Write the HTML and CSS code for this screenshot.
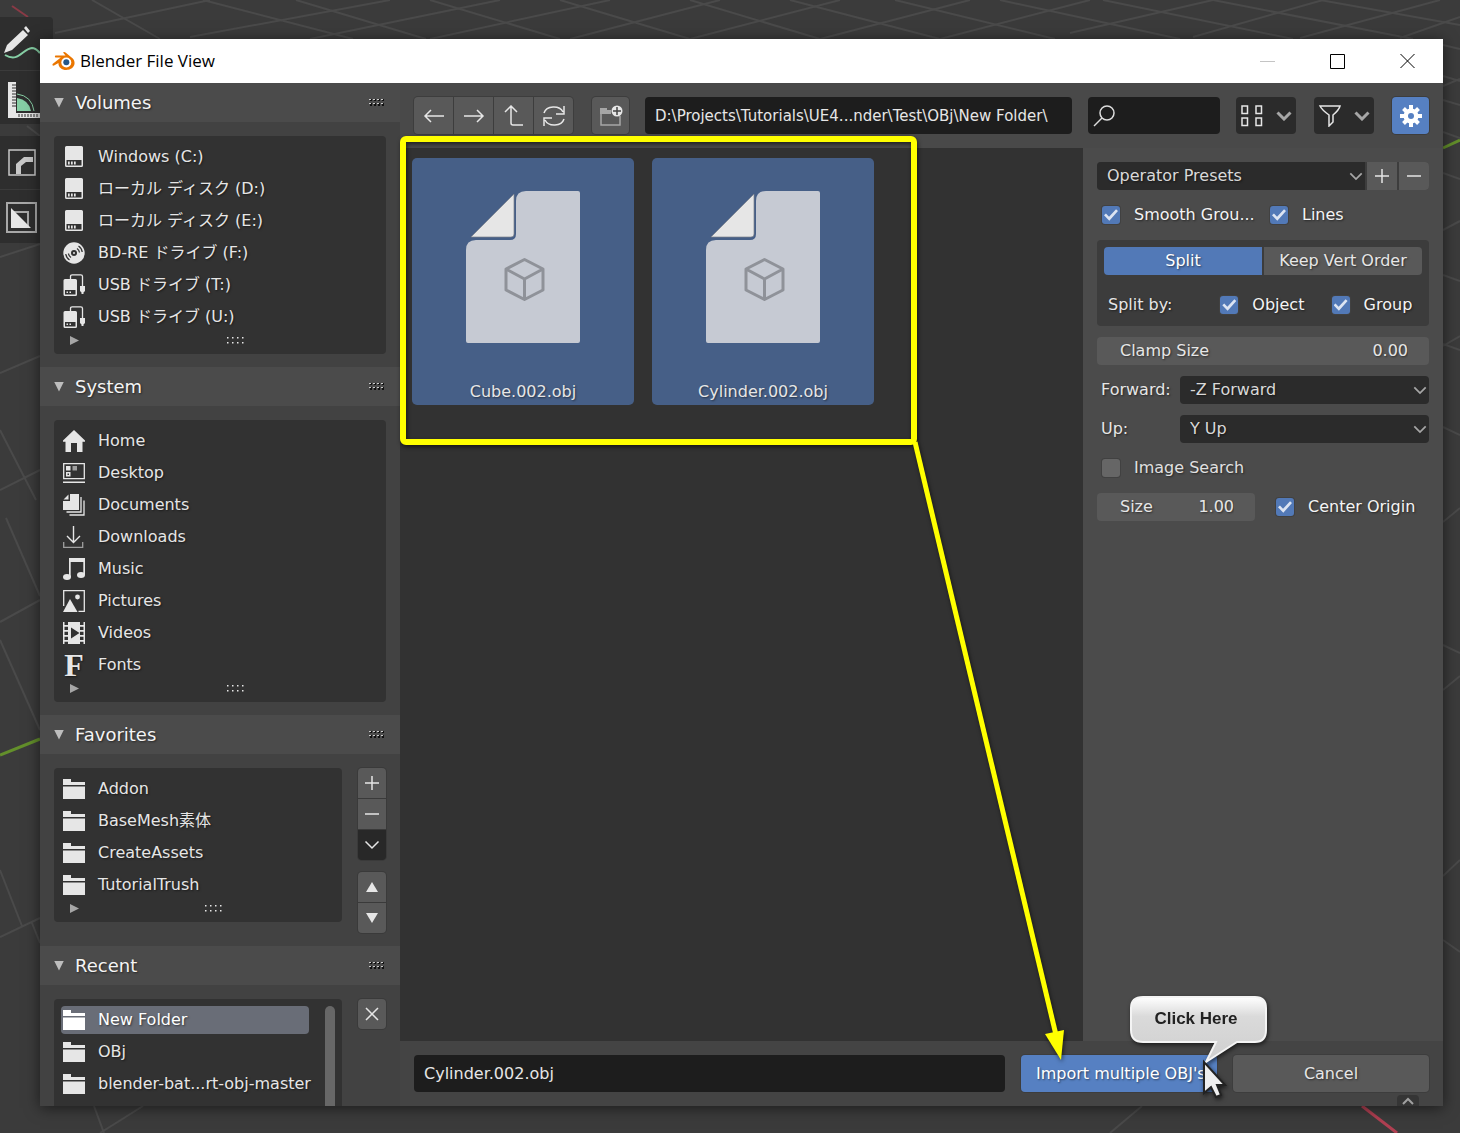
FILE: index.html
```html
<!DOCTYPE html>
<html lang="en">
<head>
    <meta charset="UTF-8">
    <title>Blender File View</title>
    <meta name="viewport" content="width=device-width, initial-scale=1.0">
    <link rel="stylesheet" href="styles.css">
</head>
<body>
    <!-- icon set -->
    <svg class="sprite" aria-hidden="true">
        <symbol id="i-disk" viewBox="0 0 22 22"><path fill-rule="evenodd" d="M3.500 0h15a1.500 1.500 0 0 1 1.500 1.500v18a1.500 1.500 0 0 1-1.500 1.500h-15A1.500 1.500 0 0 1 2 19.500v-18A1.500 1.500 0 0 1 3.500 0zM3.500 14v5.500h15V14z"/><path d="M5 15.500h1.700v3H5zM8 15.500h1.700v3H8zM11 15.500h1.700v3H11z"/></symbol>
        <symbol id="i-disc" viewBox="0 0 22 22"><circle cx="11" cy="11" r="10.700"/><circle cx="11" cy="11" r="3" fill="#323232"/><circle cx="11" cy="11" r="1" /><g fill="none" stroke="#323232" stroke-width="1.300"><path d="M14 6.500a5.500 5.500 0 0 1 2.500 4M15.500 4a8.500 8.500 0 0 1 3.700 6M8 15.500a5.500 5.500 0 0 1-2.500-4M6.500 18a8.500 8.500 0 0 1-3.700-6"/></g></symbol>
        <symbol id="i-usb" viewBox="0 0 22 22"><path fill-rule="evenodd" d="M2 5h10.500A1.500 1.500 0 0 1 14 6.500v14a1.500 1.500 0 0 1-1.500 1.500H2a1.500 1.500 0 0 1-1.500-1.500v-14A1.500 1.500 0 0 1 2 5zm0 11v4.500h10.500V16z"/><path d="M3.500 17.500H5V19H3.500zM6.500 17.500H8V19H6.500zM17 12h5v5l-1.500 1.500V20h-2v-1.500L17 17z"/><path fill="none" stroke="currentColor" stroke-width="1.300" d="M7.500 5V2.500q0-1.700 1.700-1.700h8.600q1.700 0 1.700 1.700V12"/></symbol>
        <symbol id="i-home" viewBox="0 0 22 22"><path d="M11 0l11 10.500v1.200h-2.500V22H14v-9H8v9H2.500V11.700H0v-1.200z"/></symbol>
        <symbol id="i-desktop" viewBox="0 0 22 22"><path fill="none" stroke="currentColor" stroke-width="1.300" d="M.7 1.700h20.600v15H.7z"/><path d="M0 19.500h22V21H0zM3 4h4.500v4.500H3z"/><path fill-rule="evenodd" d="M3 10h4.500v4.500H3zm1.500 1.500V13H6v-1.500z"/><path opacity=".6" d="M9.500 4H14v4.500H9.500z"/></symbol>
        <symbol id="i-docs" viewBox="0 0 22 22"><path d="M7 0h9v16H0V7h7zM5.500.5v5H.5z"/><path fill="none" stroke="currentColor" stroke-width="1.300" d="M18 3v15H3.500M21 6.500V21H6.500"/></symbol>
        <symbol id="i-download" viewBox="0 0 22 22"><path fill="none" stroke="currentColor" stroke-width="1.400" d="M10.500 0v16M4 10l6.500 6.500L17 10"/><path fill="none" stroke="currentColor" opacity=".6" stroke-width="1.300" d="M.7 16v5.300h19V16"/></symbol>
        <symbol id="i-music" viewBox="0 0 22 22"><path d="M6 0h16v17h-1.700V4H7.700v15H6z"/><ellipse cx="4" cy="19" rx="4" ry="2.900"/><ellipse cx="18" cy="17" rx="4" ry="2.900"/></symbol>
        <symbol id="i-picture" viewBox="0 0 22 22"><path fill="none" stroke="currentColor" stroke-width="1.300" d="M.7 16V.7h20.600v20.600H15.500"/><path d="M0 22l7-13 7.500 13z"/><circle cx="14.500" cy="7" r="2.400"/></symbol>
        <symbol id="i-video" viewBox="0 0 22 22"><path fill-rule="evenodd" d="M5 0h12v22H5zm3 5.500v11l8.500-5.500z"/><path d="M0 0h1.500v22H0zM20.500 0H22v22h-1.500zM1 3h4v1.800H1zM1 8h4v1.800H1zM1 13h4v1.800H1zM1 18h4v1.800H1zM17 3h4v1.800h-4zM17 8h4v1.800h-4zM17 13h4v1.800h-4zM17 18h4v1.800h-4z"/></symbol>
        <symbol id="i-folder" viewBox="0 0 22 22"><path d="M0 1h8v3h14v3H0zM0 8.500h22V21H0z"/></symbol>
        <symbol id="i-down" viewBox="0 0 16 10"><path fill="none" stroke="currentColor" d="M1.500 1.500L8 8l6.500-6.500"/></symbol>
        <symbol id="i-plus" viewBox="0 0 16 16"><path fill="none" stroke="currentColor" stroke-width="1.500" d="M8 1v14M1 8h14"/></symbol>
        <symbol id="i-minus" viewBox="0 0 16 16"><path fill="none" stroke="currentColor" stroke-width="1.500" d="M1 8h14"/></symbol>
        <symbol id="i-grip" viewBox="0 0 17 9"><path fill="#111" d="M1 1h2v2H1zM5 1h2v2H5zM9 1h2v2H9zM13 1h2v2h-2zM1 5h2v3H1zM5 5h2v3H5zM9 5h2v3H9zM13 5h2v3h-2z"/><path fill="#ccc" d="M0 1h2v1H0zM4 1h2v1H4zM8 1h2v1H8zM12 1h2v1h-2zM0 5h2v1H0zM4 5h2v1H4zM8 5h2v1H8zM12 5h2v1h-2z"/></symbol>
        <symbol id="i-dots" viewBox="0 0 17 7"><path d="M0 0h1.500v1.500H0zM5 0h1.500v1.500H5zM10 0h1.500v1.500H10zM15 0h1.500v1.500H15zM0 5h1.500v1.500H0zM5 5h1.500v1.500H5zM10 5h1.500v1.500H10zM15 5h1.500v1.500H15z"/></symbol>
        <symbol id="i-page" viewBox="0 0 114 152"><path fill="#c6cad3" d="M60 0h52q2 0 2 2v148q0 2-2 2H2q-2 0-2-2V59q0-10 10-10h34q6 0 6-6V10Q50 0 60 0z"/><path fill="#e6e6e6" stroke="#7d818a" stroke-width=".7" d="M48 3v40q0 3-3 3H5z"/><path fill="none" stroke="#8f9299" stroke-width="3" stroke-linejoin="round" d="M58.500 68.500L77 78v21l-18.500 9.500L40 99V78zM40 78l18.500 10L77 78M58.500 88v20"/></symbol>
    </svg>

    <!-- 3D viewport behind the window -->
    <svg class="viewport" viewBox="0 0 1460 1133" preserveAspectRatio="none" aria-hidden="true">
        <g fill="none" stroke="#4a4a4a" stroke-width="2">
            <path d="M92 0l68 39M203 0l150 39M296 0l130 39M430 0l130 39M560 0l130 39M690 0l130 39M790 0l150 39M895 0l160 39M1000 0l180 39M1103 0l190 39M1213 0l200 39M1320 0l140 25"/>
            <path d="M55 33L210 0M190 37L390 0M310 39L500 0M430 39L610 0M570 39L720 0M690 39L840 0M820 39L970 0M940 39L1090 0M1070 33L1213 0M1193 37L1323 0M1300 38L1440 0M1400 38l60-21"/>
            <path d="M1443 45l17 4M1443 76l17 5M1443 86l17-7M1443 100l17 5M1443 132l17 6M1443 173l17 6M1443 230l17-9M1443 275l17 6M1443 346l17-10M1443 344l17 6M1443 427l17 8M1443 522l17-14M1443 645l17 8M1443 690l17-14M1443 876l17-16M1443 940l17 12"/>
            <path d="M27 126l13 10M0 257l40-13M0 373l40-17M0 490l40-20M0 622l40-22M0 430l36 70M6 518l34 78M0 640l40 90M0 870l22 56M0 937l40-19M32 923l8 20M94 1106l10 27M100 1133l43-27M1110 1133l32-27"/>
        </g>
        <path stroke="#8a3a46" stroke-width="2" d="M12 6l16 11"/>
        <path stroke="#b04052" stroke-width="3" d="M1362 1106l35 27"/>
        <path stroke="#638f2b" stroke-width="3" d="M0 755l40-16M1443 148l17-8"/>
    </svg>

    <div class="tools">
        <button class="tool" aria-label="Annotate">
            <svg width="40" height="52" viewBox="0 0 40 52"><path fill="#e6e6e6" d="M4 35l3-8 16-15 5 5-16 15zM24 10l2-2 4 5-2 2z"/><path fill="none" stroke="#86cfa5" stroke-width="2" d="M5 37c14 8 17-6 27-7 4 0 6 3 8 5"/></svg>
        </button>
        <button class="tool" aria-label="Measure">
            <svg width="40" height="52" viewBox="0 0 40 52"><path fill="#e6e6e6" d="M8 10h8v31h24v5H8z"/><path fill="#86cfa5" d="M17 26q12 2 14 13H17z"/><path fill="none" stroke="#86cfa5" d="M17 22q15 2 17 17"/><path stroke="#2e2e2e" d="M12 13h4M12 16h4M12 19h4M12 22h4M12 25h4M12 28h4M12 31h4M12 34h4M19 42v3M22 42v3M25 42v3M28 42v3M31 42v3M34 42v3M37 42v3"/></svg>
        </button>
        <button class="tool tool-split" aria-label="Bevel">
            <svg width="40" height="52" viewBox="0 0 40 52"><path fill="none" stroke="#c8c8c8" stroke-width="1.500" d="M9 13h26v25H9z"/><path fill="#c8c8c8" d="M16 37V27l8-7h9v5h-7l-5 4v8z"/></svg>
        </button>
        <button class="tool" aria-label="Shear">
            <svg width="40" height="52" viewBox="0 0 40 52"><path fill="none" stroke="#a8a8a8" stroke-width="2" d="M7 12h29v29H7zM14 21h14v14"/><path fill="#e6e6e6" d="M11 17v20h20z"/></svg>
        </button>
    </div>

    <main class="window">
        <header class="titlebar">
            <svg class="logo" width="23" height="20" viewBox="0 0 23 20"><path fill="#ea7600" d="M11 1.500c.8-.8 1.800-.6 2.500 0l7 5.800c4 4 2 10.700-4.500 11.500-6 .8-10-3-9.500-6.800L2 14.500c-1.500.7-2.200-1-.8-2l7.600-6H4c-1.500 0-1.500-2 0-2h9.500z"/><circle cx="14.300" cy="11.500" r="5" fill="#fff"/><circle cx="14.300" cy="11.300" r="3" fill="#265787"/></svg>
            <h1 class="title">Blender File View</h1>
            <button class="win-btn" aria-label="Minimize"><svg width="16" height="16"><path stroke="#c4c4c4" d="M0 8.500h15"/></svg></button>
            <button class="win-btn" aria-label="Maximize"><svg width="16" height="16"><path fill="none" stroke="#000" d="M.5 1.500h14v14H.5z"/></svg></button>
            <button class="win-btn" aria-label="Close"><svg width="16" height="16"><path stroke="#000" d="M.5 1l14 14M14.500 1l-14 14"/></svg></button>
        </header>

        <div class="body">
            <aside class="sidebar">
                <section>
                    <button class="section-head"><span class="tri-down"></span><span>Volumes</span><svg class="grip"><use href="#i-grip"/></svg></button>
                    <div class="section-body">
                        <div class="list">
                            <ul>
                                <li><a href="#"><svg class="icon"><use href="#i-disk"/></svg>Windows (C:)</a></li>
                                <li><a href="#"><svg class="icon"><use href="#i-disk"/></svg>ローカル ディスク (D:)</a></li>
                                <li><a href="#"><svg class="icon"><use href="#i-disk"/></svg>ローカル ディスク (E:)</a></li>
                                <li><a href="#"><svg class="icon"><use href="#i-disc"/></svg>BD-RE ドライブ (F:)</a></li>
                                <li><a href="#"><svg class="icon"><use href="#i-usb"/></svg>USB ドライブ (T:)</a></li>
                                <li><a href="#"><svg class="icon"><use href="#i-usb"/></svg>USB ドライブ (U:)</a></li>
                            </ul>
                            <div class="list-foot"><span class="tri-right"></span><svg class="dots"><use href="#i-dots"/></svg></div>
                        </div>
                    </div>
                </section>

                <section>
                    <button class="section-head"><span class="tri-down"></span><span>System</span><svg class="grip"><use href="#i-grip"/></svg></button>
                    <div class="section-body">
                        <div class="list">
                            <ul>
                                <li><a href="#"><svg class="icon"><use href="#i-home"/></svg>Home</a></li>
                                <li><a href="#"><svg class="icon"><use href="#i-desktop"/></svg>Desktop</a></li>
                                <li><a href="#"><svg class="icon"><use href="#i-docs"/></svg>Documents</a></li>
                                <li><a href="#"><svg class="icon"><use href="#i-download"/></svg>Downloads</a></li>
                                <li><a href="#"><svg class="icon"><use href="#i-music"/></svg>Music</a></li>
                                <li><a href="#"><svg class="icon"><use href="#i-picture"/></svg>Pictures</a></li>
                                <li><a href="#"><svg class="icon"><use href="#i-video"/></svg>Videos</a></li>
                                <li><a href="#"><span class="icon font-icon" aria-hidden="true">F</span>Fonts</a></li>
                            </ul>
                            <div class="list-foot"><span class="tri-right"></span><svg class="dots"><use href="#i-dots"/></svg></div>
                        </div>
                    </div>
                </section>

                <section>
                    <button class="section-head"><span class="tri-down"></span><span>Favorites</span><svg class="grip"><use href="#i-grip"/></svg></button>
                    <div class="section-body">
                        <div class="list">
                            <ul>
                                <li><a href="#"><svg class="icon"><use href="#i-folder"/></svg>Addon</a></li>
                                <li><a href="#"><svg class="icon"><use href="#i-folder"/></svg>BaseMesh素体</a></li>
                                <li><a href="#"><svg class="icon"><use href="#i-folder"/></svg>CreateAssets</a></li>
                                <li><a href="#"><svg class="icon"><use href="#i-folder"/></svg>TutorialTrush</a></li>
                            </ul>
                            <div class="list-foot"><span class="tri-right"></span><svg class="dots"><use href="#i-dots"/></svg></div>
                        </div>
                        <div class="side-btns">
                            <div class="btn-stack">
                                <button aria-label="Add"><svg width="16" height="16"><use href="#i-plus"/></svg></button>
                                <button aria-label="Remove"><svg width="16" height="16"><use href="#i-minus"/></svg></button>
                                <button class="dark" aria-label="More"><svg width="16" height="10" stroke-width="1.500"><use href="#i-down"/></svg></button>
                            </div>
                            <div class="btn-stack">
                                <button aria-label="Move up"><svg width="14" height="12"><path d="M7 1l6 10H1z"/></svg></button>
                                <button aria-label="Move down"><svg width="14" height="12"><path d="M7 11L1 1h12z"/></svg></button>
                            </div>
                        </div>
                    </div>
                </section>

                <section>
                    <button class="section-head"><span class="tri-down"></span><span>Recent</span><svg class="grip"><use href="#i-grip"/></svg></button>
                    <div class="section-body">
                        <div class="list list-scroll">
                            <ul>
                                <li><a class="active" href="#"><svg class="icon"><use href="#i-folder"/></svg>New Folder</a></li>
                                <li><a href="#"><svg class="icon"><use href="#i-folder"/></svg>OBj</a></li>
                                <li><a href="#"><svg class="icon"><use href="#i-folder"/></svg>blender-bat...rt-obj-master</a></li>
                            </ul>
                            <div class="scrollbar"></div>
                        </div>
                        <div class="side-btns">
                            <div class="btn-stack">
                                <button aria-label="Clear"><svg width="14" height="14" stroke="currentColor" stroke-width="1.500"><path d="M1 1l12 12M13 1L1 13"/></svg></button>
                            </div>
                        </div>
                    </div>
                </section>
            </aside>

            <div class="main">
                <div class="toolbar">
                    <div class="btn-group">
                        <button class="btn" aria-label="Back"><svg width="22" height="22"><path d="M21 11H2M8 5l-6 6 6 6"/></svg></button>
                        <button class="btn" aria-label="Forward"><svg width="22" height="22"><path d="M1 11h19M14 5l6 6-6 6"/></svg></button>
                        <button class="btn" aria-label="Parent directory"><svg width="22" height="22"><path d="M8 1v17q0 2 2 2h10M2 7l6-6 6 6"/></svg></button>
                        <button class="btn" aria-label="Refresh"><svg width="22" height="22"><path d="M1 8a10 8 0 0 1 19-1M21 1v8h-8M21 14a10 8 0 0 1-19 1M1 21v-8h8"/></svg></button>
                    </div>
                    <button class="btn new-folder" aria-label="New folder"><svg width="24" height="22"><path stroke="#a6a6a6" d="M2 9v11h19V11"/><path fill="#a6a6a6" stroke="none" d="M1 3h7v2h4v4H1z"/><circle cx="18" cy="6" r="5.500" fill="#e6e6e6" stroke="none"/><path stroke="#444" d="M18 2v8M14 6h8"/></svg></button>
                    <input class="field path" type="text" aria-label="Path" value="D:\Projects\Tutorials\UE4...nder\Test\OBj\New Folder\">
                    <label class="search">
                        <svg width="22" height="22"><circle cx="14" cy="8" r="7"/><path d="M9 13l-8 8"/></svg>
                        <input type="search" aria-label="Search">
                    </label>
                    <button class="btn drop" aria-label="Display mode"><svg width="24" height="22"><path d="M2 1h5.500v7.500H2zM16 1h5.500v7.500H16zM2 13h5.500v7.500H2zM16 13h5.500v7.500H16z"/></svg><svg class="chev" width="16" height="10"><use href="#i-down"/></svg></button>
                    <button class="btn drop" aria-label="Filter"><svg width="24" height="22"><path d="M2 1h20q-1 4-7 9v7l-4 4V10Q4 5 2 1z"/></svg><svg class="chev" width="16" height="10"><use href="#i-down"/></svg></button>
                    <button class="btn gear" aria-label="Options"><svg width="22" height="22" viewBox="0 0 22 22"><g stroke="#fff" stroke-width="4"><path d="M11 0v22M0 11h22M3.500 3.500l15 15M18.500 3.500l-15 15"/></g><circle cx="11" cy="11" r="7.500" fill="#fff" stroke="none"/><circle cx="11" cy="11" r="3" fill="#5680c2" stroke="none"/></svg></button>
                </div>

                <div class="content">
                    <div class="files">
                        <button class="file"><svg class="page" width="114" height="152"><use href="#i-page"/></svg><span>Cube.002.obj</span></button>
                        <button class="file"><svg class="page" width="114" height="152"><use href="#i-page"/></svg><span>Cylinder.002.obj</span></button>
                    </div>

                    <form class="options">
                        <div class="presets">
                            <div class="select">
                                <select aria-label="Operator presets"><option>Operator Presets</option></select>
                                <svg width="14" height="9" stroke-width="2"><use href="#i-down"/></svg>
                            </div>
                            <button type="button" aria-label="Add preset"><svg width="16" height="16"><use href="#i-plus"/></svg></button>
                            <button type="button" aria-label="Remove preset"><svg width="16" height="16"><use href="#i-minus"/></svg></button>
                        </div>
                        <div class="row-checks">
                            <label class="check"><input type="checkbox" checked>Smooth Grou...</label>
                            <label class="check"><input type="checkbox" checked>Lines</label>
                        </div>
                        <div class="box">
                            <div class="tabs">
                                <button type="button" class="on">Split</button>
                                <button type="button">Keep Vert Order</button>
                            </div>
                            <div class="split-by">
                                <span>Split by:</span>
                                <label class="check"><input type="checkbox" checked>Object</label>
                                <label class="check"><input type="checkbox" checked>Group</label>
                            </div>
                        </div>
                        <label class="number">Clamp Size<input type="text" value="0.00"></label>
                        <div class="row-select">
                            <label for="forward">Forward:</label>
                            <div class="select">
                                <select id="forward"><option>-Z Forward</option></select>
                                <svg width="14" height="9" stroke-width="2"><use href="#i-down"/></svg>
                            </div>
                        </div>
                        <div class="row-select">
                            <label for="up">Up:</label>
                            <div class="select">
                                <select id="up"><option>Y Up</option></select>
                                <svg width="14" height="9" stroke-width="2"><use href="#i-down"/></svg>
                            </div>
                        </div>
                        <label class="check dim"><input type="checkbox">Image Search</label>
                        <div class="row-size">
                            <label class="number">Size<input type="text" value="1.00"></label>
                            <label class="check"><input type="checkbox" checked>Center Origin</label>
                        </div>
                    </form>
                </div>

                <footer class="footer">
                    <input class="field filename" type="text" aria-label="File name" value="Cylinder.002.obj">
                    <button class="btn action primary">Import multiple OBJ's</button>
                    <button class="btn action">Cancel</button>
                    <button class="region-tab" aria-label="Toggle region"><svg width="14" height="8"><path fill="none" stroke="#a0a0a0" stroke-width="2" d="M2 7l5-5 5 5"/></svg></button>
                </footer>
            </div>
        </div>
    </main>

    <!-- tutorial marks drawn over the window -->
    <svg class="marks" width="1460" height="1133" viewBox="0 0 1460 1133">
        <defs>
            <linearGradient id="bubble" x1="0" y1="0" x2="0" y2="1">
                <stop offset="0" stop-color="#fff"/>
                <stop offset=".3" stop-color="#dadada"/>
                <stop offset="1" stop-color="#cfcfcf"/>
            </linearGradient>
        </defs>
        <g class="shadowed">
            <rect x="403" y="139" width="511" height="303" rx="3" fill="none" stroke="#ff0" stroke-width="6"/>
            <path stroke="#ff0" stroke-width="5" d="M915 442l141 593"/>
            <path fill="#ff0" d="M1045 1034l19-4-3 30z"/>
        </g>
        <g class="shadowed">
            <path fill="url(#bubble)" stroke="#f4f4f4" stroke-width="2" d="M1143 997h112q11 0 11 11v22q0 12-11 12h-18l-31 20 10-20h-73q-12 0-12-12v-22q0-11 12-11z"/>
            <text class="bubble-text" x="1196" y="1024" text-anchor="middle">Click Here</text>
            <path fill="#eee" stroke="#222" stroke-width="2" d="M1204 1062v31l7-6 5 10 5-2-4-10h8z"/>
        </g>
    </svg>
</body>
</html>
```

FILE: styles.css
```css
* {
    box-sizing: border-box;
}
body {
    margin: 0;
    min-height: 100vh;
    position: relative;
    overflow: hidden;
    background: #3b3b3b;
    color: #e6e6e6;
    font-family: 'DejaVu Sans', 'Noto Sans CJK JP', sans-serif;
    font-size: 16px;
    line-height: 20px;
}
button, input, select {
    font: inherit;
    color: inherit;
    border: 0;
    margin: 0;
    padding: 0;
}
button {
    display: flex;
    align-items: center;
    justify-content: center;
    background: #595959;
    text-shadow: inherit;
}
svg {
    display: block;
    fill: currentColor;
    flex-shrink: 0;
}
.sprite {
    position: absolute;
    width: 0;
    height: 0;
}
.viewport {
    position: absolute;
    width: 100%;
    height: 100%;
}

/* tool strip */
.tools {
    position: absolute;
    top: 17px;
    left: 0;
    width: 53px;
}
.tool {
    width: 100%;
    height: 53px;
    margin-bottom: 1px;
    justify-content: flex-start;
    background: #2e2e2e;
    border-radius: 0 4px 4px 0;
}
.tool-split {
    margin-top: 12px;
}

/* window */
.window {
    position: absolute;
    top: 39px;
    right: 17px;
    bottom: 27px;
    left: 40px;
    display: flex;
    flex-direction: column;
    background: #494949;
    box-shadow: 0 2px 14px rgba(0,0,0,0.55);
    text-shadow: 1px 1px 2px rgba(0,0,0,0.5);
}
.titlebar {
    display: flex;
    align-items: center;
    height: 44px;
    flex-shrink: 0;
    padding-left: 12px;
    background: #fff;
    color: #000;
    text-shadow: none;
}
.title {
    flex: 1;
    margin: 0;
    padding-left: 5px;
    font-family: 'Open Sans', sans-serif;
    font-size: 17px;
    font-weight: 400;
}
.win-btn {
    width: 70px;
    height: 44px;
    background: none;
}
.body {
    display: grid;
    grid-template-columns: 360px minmax(0, 1fr);
    flex: 1;
    min-height: 0;
}

/* sidebar */
.sidebar {
    background: #424242;
    overflow: hidden;
}
.section-head {
    width: 100%;
    height: 39px;
    padding: 0 14px;
    justify-content: flex-start;
    gap: 11px;
    background: #4b4b4b;
    color: #f4f4f4;
    font-size: 18px;
}
.tri-down {
    width: 10px;
    height: 10px;
    background: #bdbdbd;
    clip-path: polygon(0 0, 100% 0, 50% 100%);
}
.grip {
    width: 17px;
    height: 9px;
    margin-left: auto;
}
.section-body {
    display: flex;
    gap: 16px;
    padding: 14px 14px 13px;
}
.list {
    flex: 1;
    min-width: 0;
    align-self: flex-start;
    padding-top: 5px;
    background: #323232;
    border-radius: 4px;
}
.list ul {
    list-style: none;
    margin: 0;
    padding: 0;
    flex: 1;
    min-width: 0;
}
.list li {
    padding: 2px 7px;
}
.list a {
    display: flex;
    align-items: center;
    gap: 13px;
    height: 28px;
    padding-left: 2px;
    border-radius: 4px;
    color: #e6e6e6;
    text-decoration: none;
    white-space: nowrap;
}
.list a.active {
    background: #696d77;
    color: #fff;
}
.icon {
    width: 22px;
    height: 22px;
}
.font-icon {
    font: bold 32px/22px 'Liberation Serif', serif;
    text-align: center;
}
.list-foot {
    display: flex;
    align-items: center;
    height: 21px;
    padding: 0 0 6px 16px;
}
.tri-right {
    width: 9px;
    height: 9px;
    margin-right: 5px;
    background: #a6a6a6;
    clip-path: polygon(0 0, 100% 50%, 0 100%);
}
.dots {
    width: 17px;
    height: 7px;
    margin: 0 auto;
}
.list-scroll {
    display: flex;
    height: 160px;
}
.scrollbar {
    width: 10px;
    margin: 2px 7px 0 9px;
    flex-shrink: 0;
    border-radius: 5px;
    background: #676767;
}
.side-btns {
    display: flex;
    flex-direction: column;
    gap: 12px;
}
.btn-stack {
    display: flex;
    flex-direction: column;
    gap: 1px;
    border-radius: 4px;
    overflow: hidden;
    background: #3a3a3a;
    box-shadow: 0 0 0 1px #3a3a3a;
}
.btn-stack button {
    width: 28px;
    height: 30px;
}
.btn-stack .dark {
    background: #282828;
}

/* main area */
.main {
    display: flex;
    flex-direction: column;
    min-width: 0;
}
.toolbar {
    display: flex;
    gap: 16px;
    padding: 14px;
    background: #494949;
}
.btn {
    width: 37px;
    height: 37px;
    border-radius: 4px;
    box-shadow: 0 0 0 1px #3d3d3d;
}
.toolbar .btn svg {
    fill: none;
    stroke: #e6e6e6;
    stroke-width: 1.5;
}
.btn-group {
    display: flex;
    gap: 1px;
    border-radius: 4px;
    overflow: hidden;
    background: #3d3d3d;
    box-shadow: 0 0 0 1px #3d3d3d;
}
.btn-group .btn {
    width: 39px;
    border-radius: 0;
}
.new-folder {
    margin-left: 3px;
}
.field {
    min-width: 0;
    height: 37px;
    padding: 0 10px;
    flex: 1;
    background: #1d1d1d;
    border-radius: 4px;
}
.path {
    font-size: 15px;
}
.search {
    display: flex;
    align-items: center;
    width: 132px;
    height: 37px;
    padding: 0 5px;
    background: #1d1d1d;
    border-radius: 4px;
}
.search svg {
    fill: none;
    stroke: #ddd;
    stroke-width: 1.5;
}
.search input {
    min-width: 0;
    width: 100%;
    background: none;
}
.drop {
    width: 60px;
    padding: 0 4px;
    justify-content: space-between;
    background: #2b2b2b;
    box-shadow: none;
}
.drop + .btn {
    margin-left: 2px;
}
.toolbar .btn .chev {
    stroke-width: 3;
    color: #a6a6a6;
}
.gear {
    background: #5680c2;
}
.content {
    display: grid;
    grid-template-columns: minmax(0, 1fr) 360px;
    flex: 1;
    min-height: 0;
}
.files {
    display: flex;
    flex-wrap: wrap;
    align-content: flex-start;
    gap: 18px;
    padding: 10px 12px;
    background: #323232;
}
.file {
    flex-direction: column;
    justify-content: space-between;
    width: 222px;
    height: 247px;
    padding: 33px 0 3px;
    background: #465f87;
    border-radius: 5px;
}

/* import options */
.options {
    display: flex;
    flex-direction: column;
    gap: 11px;
    padding: 14px;
    background: #4b4b4b;
}
.presets {
    display: flex;
    gap: 2px;
    border-radius: 4px;
    overflow: hidden;
    background: #3d3d3d;
}
.presets .select {
    flex: 1;
}
.presets .select select {
    border-radius: 0;
}
.presets button {
    width: 30px;
    height: 28px;
}
.select {
    position: relative;
}
.select select {
    display: block;
    width: 100%;
    height: 28px;
    padding: 0 28px 0 10px;
    appearance: none;
    background: #2b2b2b;
    border-radius: 4px;
    text-shadow: inherit;
    color: #d9d9d9;
}
.select svg {
    position: absolute;
    top: 10px;
    right: 2px;
    color: #a6a6a6;
    pointer-events: none;
}
.row-checks {
    display: grid;
    grid-template-columns: 1fr 1fr;
    gap: 4px;
}
.check {
    display: flex;
    align-items: center;
    gap: 14px;
    height: 28px;
    padding-left: 5px;
    color: #f4f4f4;
    white-space: nowrap;
}
.check.dim {
    color: #e0e0e0;
}
.check input {
    width: 18px;
    height: 18px;
    display: grid;
    place-items: center;
    appearance: none;
    flex-shrink: 0;
    background: #666;
    border-radius: 3px;
    box-shadow: 0 0 0 1px #414141;
}
.check input:checked {
    background: #5279b7;
}
.check input:checked::before {
    content: '';
    width: 14px;
    height: 12px;
    background: #dce4f2;
    clip-path: polygon(0 52%, 14% 38%, 36% 64%, 86% 2%, 100% 16%, 38% 98%);
}
.box {
    display: flex;
    flex-direction: column;
    gap: 16px;
    padding: 7px;
    background: #3c3c3c;
    border-radius: 4px;
}
.tabs {
    display: grid;
    grid-template-columns: 1fr 1fr;
    gap: 2px;
    border-radius: 4px;
    overflow: hidden;
}
.tabs button {
    height: 28px;
}
.tabs .on {
    background: #5279b7;
    color: #fff;
}
.split-by {
    display: grid;
    grid-template-columns: 7fr 7fr 6fr;
    align-items: center;
}
.split-by span {
    padding-left: 4px;
}
.number {
    display: flex;
    align-items: center;
    justify-content: space-between;
    height: 28px;
    padding: 0 21px 0 23px;
    background: #595959;
    border-radius: 4px;
}
.number input {
    width: 60px;
    background: none;
    text-align: right;
    text-shadow: inherit;
}
.row-select {
    display: grid;
    grid-template-columns: 1fr 3fr;
    align-items: center;
}
.row-select label {
    padding-left: 4px;
}
.row-size {
    display: grid;
    grid-template-columns: 1fr 1fr;
    gap: 16px;
}

/* footer */
.footer {
    position: relative;
    display: flex;
    gap: 16px;
    padding: 14px;
    background: #444;
}
.action {
    width: 196px;
}
.primary {
    background: #5680c2;
    color: #fff;
    justify-content: flex-start;
    padding-left: 15px;
    white-space: nowrap;
}
.region-tab {
    position: absolute;
    right: 24px;
    bottom: 0;
    width: 22px;
    height: 11px;
    background: #353535;
    border-radius: 4px 4px 0 0;
}

/* tutorial marks */
.marks {
    position: absolute;
    top: 0;
    left: 0;
    pointer-events: none;
}
.shadowed {
    filter: drop-shadow(1px 2px 2px rgba(0,0,0,0.6));
}
.bubble-text {
    font: bold 17px 'Liberation Sans', sans-serif;
    fill: #222;
}
```
